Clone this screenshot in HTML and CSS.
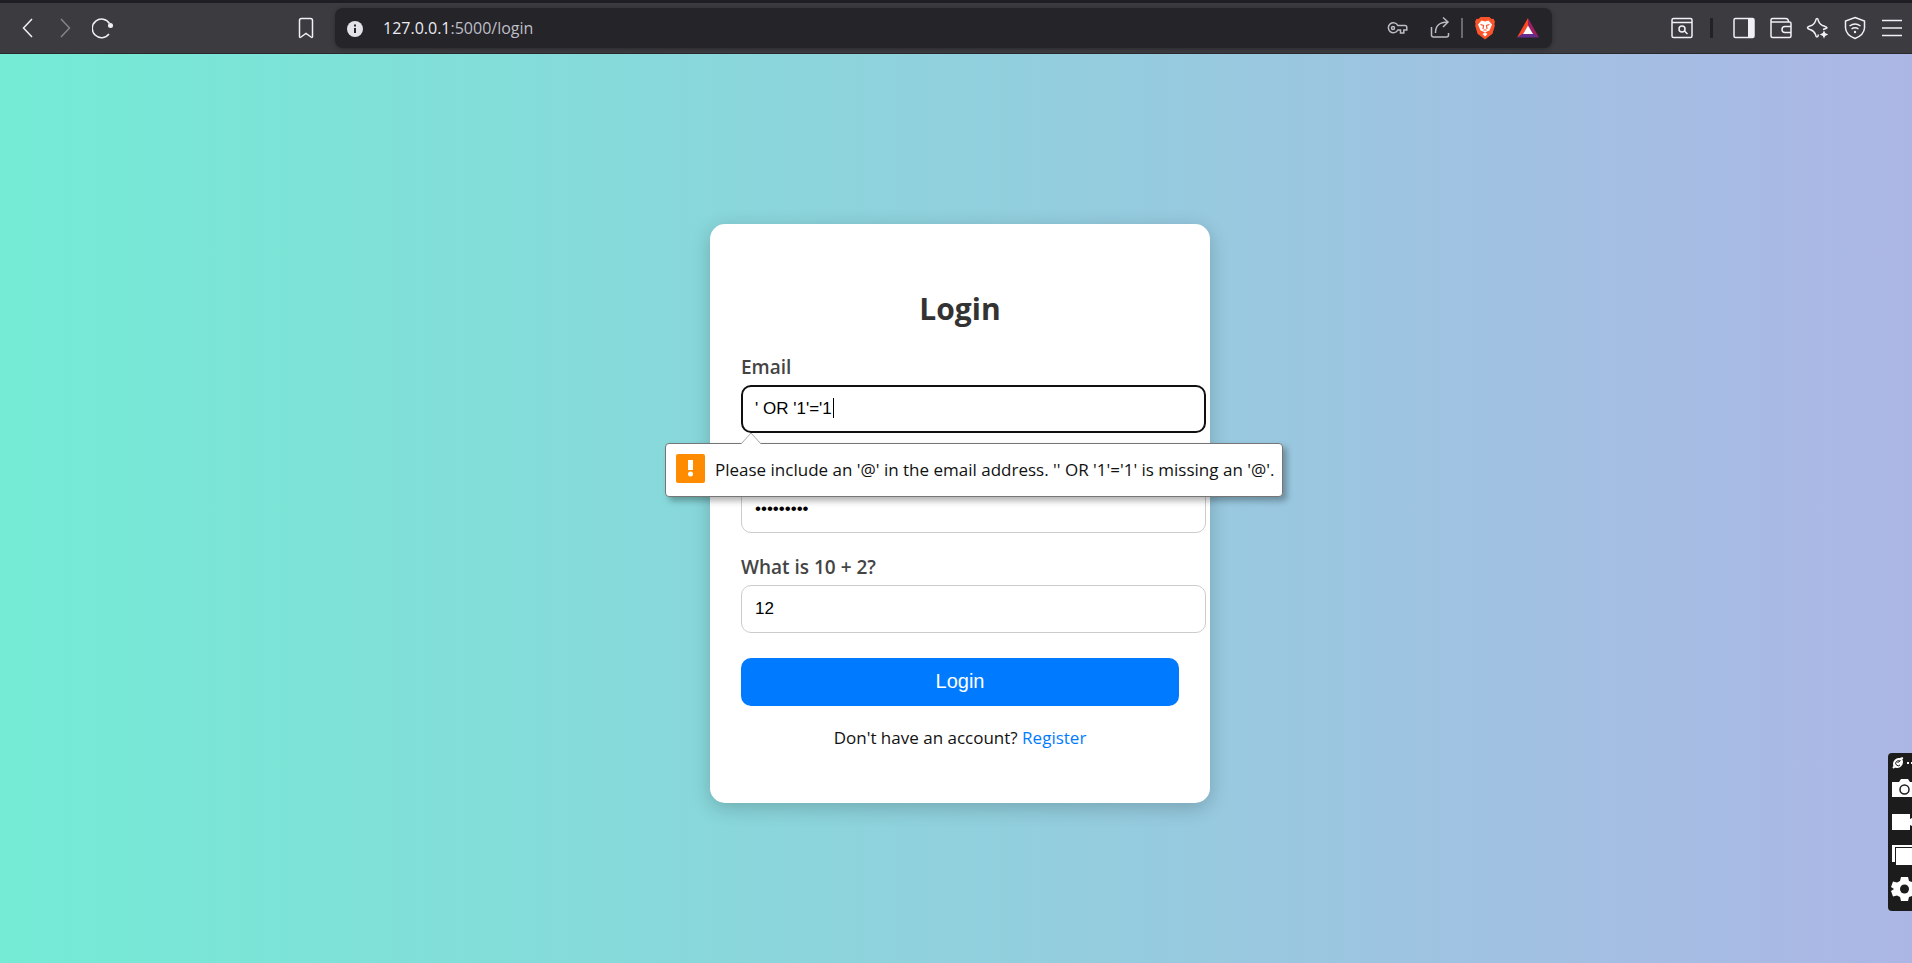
FILE: index.html
```html
<!DOCTYPE html>
<html lang="en">
<head>
<meta charset="utf-8">
<title>Login</title>
<link rel="stylesheet" href="styles.css">
</head>
<body>
<header class="toolbar">
  <nav class="nav-group" aria-label="Navigation">
    <button class="tool" aria-label="Back"><svg width="24" height="24" viewBox="0 0 24 24"><path d="M16 3 7.500 12 16 21"/></svg></button>
    <button class="tool dim" aria-label="Forward"><svg width="24" height="24" viewBox="0 0 24 24"><path d="M7 3l8.500 9L7 21"/></svg></button>
    <button class="tool" aria-label="Reload"><svg width="24" height="24" viewBox="0 0 24 24"><path d="M17.500 7.500A9.300 9.300 0 1 0 17 18"/><circle class="solid" cx="18.500" cy="9.500" r="2.500"/></svg></button>
    <button class="tool bookmark" aria-label="Bookmark"><svg width="24" height="24" viewBox="0 0 24 24"><path d="M5.500 20.500V4.500Q5.500 2.500 7.500 2.500H16.500Q18.500 2.500 18.500 4.500V20.500Q18.500 22 17 21L12 17.500 7 21Q5.500 22 5.500 20.500Z"/></svg></button>
  </nav>
  <div class="address">
    <svg class="info" width="18" height="18" viewBox="0 0 18 18"><circle cx="9" cy="9" r="8" fill="#e3e2e8"/><path d="M9 8v5M9 4.500v2" stroke="#242429" stroke-width="2"/></svg>
    <p class="url"><span class="host">127.0.0.1</span>:5000/login</p>
    <div class="address-tools">
      <button class="tool muted" aria-label="Passwords"><svg width="24" height="24" viewBox="0 0 24 24"><path d="M12.800 9.500H20q1.800 0 1.800 2v2.500h-3v3h-3.300v-3h-2.700A5 5 0 1 1 12.800 9.500Z"/><circle cx="8" cy="12" r="1.500"/></svg></button>
      <button class="tool muted" aria-label="Share"><svg width="24" height="24" viewBox="0 0 24 24"><path d="M3.500 11v8q0 2 2 2h13q2 0 2-2v-2M7.500 17c0-7 3-11 12.500-11M15 1.500l5 4.500-5 5"/></svg></button>
      <span class="divider"></span>
      <button class="tool" aria-label="Brave Shields"><svg width="24" height="24" viewBox="0 0 24 24"><path d="M7.500 1h9l2 2 2-.3 1.500 3-.6 2 .4 2-2.300 8L12 23.500 4.500 17.700 2.200 9.700l.4-2-.6-2 1.500-3 2 .3Z" fill="#fb542b" stroke="none"/><path d="M8.500 4.500 12 5.500l3.500-1 3.500 4-2.500 6-2.500 1-2 1 2.500 1.500L12 20.500 9.500 18l2.500-1.500-2-1-2.500-1L5 8.500Z" fill="#fff" stroke="none"/><path d="M7.500 8.500l3 1-.5 3.500M16.500 8.500l-3 1 .5 3.500M10.500 14h3" stroke="#fb542b" stroke-width="1.200"/></svg></button>
      <button class="tool" aria-label="Brave Rewards"><svg width="24" height="24" viewBox="0 0 24 24"><path d="M12 2 1 21.500 7 18 12 9.500Z" fill="#ff4724" stroke="none"/><path d="M12 2 23 21.500 17 18 12 9.500Z" fill="#9e1f63" stroke="none"/><path d="M1 21.500H23L17 17.500H7Z" fill="#662d91" stroke="none"/><path d="M12 9.500 17 18H7Z" fill="#fff" stroke="none"/></svg></button>
    </div>
  </div>
  <div class="actions">
    <button class="tool" aria-label="Search tabs"><svg width="24" height="24" viewBox="0 0 24 24"><rect x="2" y="2.500" width="20" height="19" rx="1.500"/><path d="M2 6.500h20"/><circle cx="12" cy="13" r="3"/><path d="M14.500 15l3 3"/></svg></button>
    <span class="notch"></span>
    <button class="tool" aria-label="Sidebar"><svg width="24" height="24" viewBox="0 0 24 24"><rect x="2" y="2.500" width="20" height="19" rx="1.500"/><path class="solid" d="M16 3h6v18h-6z"/></svg></button>
    <button class="tool" aria-label="Wallet"><svg width="24" height="24" viewBox="0 0 24 24"><path d="M2 4q0-1.500 1.500-1.500H16.500Q19.500 2.500 19.500 6H20.500Q22 6 22 7.500V20Q22 21.500 20.500 21.500H3.500Q2 21.500 2 20ZM2.500 6H20M22 10.500H16q-3 0-3 3t3 3H22"/></svg></button>
    <button class="tool" aria-label="Assistant"><svg width="24" height="24" viewBox="0 0 24 24"><path d="M11 2.500Q12 2.500 12.500 5 14 9 18 10 21 11 21 11.800 20.500 12.500 17 13.500 M11 2.500Q10 2.500 9.500 5 8 9 4 10 1.500 10.800 1.500 11.800 2 12.800 4 13.500 8 14.800 9.500 18.500 10 21 11 21 12 21 12.500 18.500"/><path class="solid" d="M18 14.500l1.200 2.600 3 1.400-3 1.400L18 22.500l-1.200-2.600-3-1.400 3-1.400z"/></svg></button>
    <button class="tool" aria-label="VPN"><svg width="24" height="24" viewBox="0 0 24 24"><path d="M12 1.500 21.500 5V12Q21 19 12 22.500 3 19 2.500 12V5ZM6.500 10Q12 6 17.500 10M8.500 13Q12 10.500 15.500 13"/><circle class="solid" cx="12" cy="16" r="1.200"/></svg></button>
    <button class="tool" aria-label="Menu"><svg width="24" height="24" viewBox="0 0 24 24"><path d="M2 4.500h20M2 12h20M2 19.500h20"/></svg></button>
  </div>
</header>

<main class="page">
  <form class="card" novalidate>
    <h2 class="title">Login</h2>
    <div class="field">
      <label for="email">Email</label>
      <div class="control">
        <input class="current" id="email" type="text" value="' OR '1'='1">
        <span class="caret"></span>
        <div class="bubble" role="alert">
          <svg class="arrow" width="22" height="12" viewBox="0 0 22 12"><path d="M1 12 11 1 21 12" fill="#fff" stroke="#a8a8a8"/></svg>
          <svg class="warn" width="29" height="29" viewBox="0 0 29 29"><rect width="29" height="29" rx="2" fill="#ff8c00"/><path d="M12 6h5v10h-5z" fill="#fff"/><circle cx="14.500" cy="20" r="2.500" fill="#fff"/></svg>
          <span>Please include an '@' in the email address. '' OR '1'='1' is missing an '@'.</span>
        </div>
      </div>
    </div>
    <div class="field">
      <label class="covered" for="password">Password</label>
      <input id="password" type="password" value="password1">
    </div>
    <div class="field">
      <label for="captcha">What is 10 + 2?</label>
      <input id="captcha" type="text" value="12">
    </div>
    <button class="submit" type="button">Login</button>
    <p class="register">Don't have an account? <a href="#register">Register</a></p>
  </form>
</main>

<aside class="recorder" aria-label="Capture tools">
  <svg width="24" height="24" viewBox="0 0 24 24"><ellipse cx="10" cy="10" rx="5.500" ry="4.500" fill="#fff" transform="rotate(-45 10 10)"/><path d="M5 15l2-2M12 6l3-1" stroke="#fff" stroke-width="2"/><path d="M12 8.500a2.500 2.500 0 1 0 0 3.500M9.500 10l3-3" fill="none" stroke="#1c1c1c"/><path d="M19 9h2v2h-2zM23 9h1v2h-1z" fill="#fff"/></svg>
  <button class="capture" aria-label="Screenshot"><svg width="24" height="24" viewBox="0 0 24 24"><path d="M4 5h7l2-3h7l2 3h2v15H4z" fill="#fff"/><circle cx="16.500" cy="12.500" r="4.500" fill="none" stroke="#1c1c1c" stroke-width="1.500"/></svg></button>
  <button class="capture" aria-label="Record"><svg width="24" height="24" viewBox="0 0 24 24"><path d="M4 4h18v5l2-1v8l-2-1v5H4z" fill="#fff"/></svg></button>
  <button class="capture" aria-label="Gallery"><svg width="24" height="24" viewBox="0 0 24 24"><path d="M4 2h20v2H7v15H4zM8 5h16v17H8z" fill="#fff"/></svg></button>
  <button class="capture" aria-label="Settings"><svg width="24" height="26" viewBox="0 0 24 26"><path d="M13 1h7l1 4 3 1v14l-3 1-1 4h-7l-1-4-3-1.500-4 1L3 15l3-2-3-2 2-5.500 4 1L12 5z" fill="#fff"/><circle cx="16.500" cy="13" r="4.500" fill="#1c1c1c"/></svg></button>
</aside>
</body>
</html>
```
FILE: styles.css
```css
* { box-sizing: border-box; }

body {
  margin: 0;
  min-height: 100vh;
  display: flex;
  flex-direction: column;
  font-family: "Open Sans", "Noto Sans", sans-serif;
  font-size: 17px;
  line-height: 24px;
  color: #111;
  background: linear-gradient(to right, #74ebd5, #acb6e5);
}

button { font: inherit; cursor: pointer; }

.toolbar {
  display: flex;
  align-items: center;
  height: 54px;
  padding-right: 2px;
  border-top: 3px solid #1f1e24;
  border-bottom: 1px solid #2a292e;
  background: #3c3b40;
}

.tool {
  display: flex;
  align-items: center;
  justify-content: center;
  width: 37px;
  height: 36px;
  padding: 0;
  border: 0;
  background: none;
  color: #f1f0f6;
}
.tool svg { fill: none; stroke: currentColor; stroke-width: 1.5; }
.tool .solid { fill: currentColor; stroke: none; }
.tool.dim { color: #85848a; }
.tool.muted { color: #bdbcc4; }

.nav-group { display: flex; flex: none; width: 335px; padding: 0 10px 0 9px; }
.nav-group .tool { width: 38px; }
.nav-group .bookmark { margin-left: auto; }

.address {
  display: flex;
  flex: 1;
  align-items: center;
  height: 40px;
  padding: 0 3px 0 11px;
  border-radius: 8px;
  background: #242429;
  box-shadow: 0 1px 5px rgba(0, 0, 0, .3);
}
.info { margin-top: 2px; }
.url { flex: 1; margin: 0 0 0 19px; font-size: 16px; color: #bfbec6; }
.host { color: #ecebf1; }
.address-tools { display: flex; align-items: center; }
.address-tools .tool { width: 43px; }
.divider { width: 2px; height: 20px; background: #6b6a70; }

.actions { display: flex; flex: none; align-items: center; width: 358px; justify-content: flex-end; }
.notch { width: 3px; height: 20px; margin: 0 12px 0 10px; background: #222126; border-radius: 1px; }

.page {
  flex: 1;
  display: flex;
  align-items: center;
  justify-content: center;
  padding: 20px 16px 10px 24px;
}

.card {
  width: 500px;
  padding: 31px;
  border-radius: 15px;
  background: #fff;
  box-shadow: 0 5px 20px rgba(0, 0, 0, .2);
}
.title {
  margin: 34px 0 26px;
  font-size: 30px;
  line-height: 40px;
  text-align: center;
  color: #333;
}
.field { margin-bottom: 22px; }
.field label {
  display: block;
  margin-bottom: 6px;
  font-size: 19px;
  font-weight: 600;
  color: #444;
}
.field .covered { visibility: hidden; }
.control { position: relative; }
.field input {
  display: block;
  box-sizing: content-box;
  width: calc(100% - 1px);
  height: 20px;
  padding: 13px;
  border: 1px solid #ccc;
  border-radius: 10px;
  outline: 0;
  background: #fff;
  color: #000;
  font: 17px "Liberation Sans", Arial, sans-serif;
}
.field .current { padding: 12px; border: 2px solid #101010; }

.caret {
  position: absolute;
  left: 92px;
  top: 13px;
  width: 1px;
  height: 20px;
  background: #000;
}

.bubble {
  position: absolute;
  z-index: 1;
  top: 58px;
  left: -76px;
  display: flex;
  align-items: center;
  gap: 10px;
  height: 54px;
  padding: 0 8px 0 10px;
  border: 1px solid #767676;
  border-radius: 4px;
  background: #fff;
  box-shadow: 4px 4px 6px rgba(0, 0, 0, .3);
  white-space: nowrap;
}
.warn { margin-bottom: 4px; }
.arrow { position: absolute; top: -12px; left: 74px; }

.submit {
  display: block;
  width: 100%;
  height: 48px;
  margin-top: 25px;
  padding: 0 0 2px;
  border: 0;
  border-radius: 10px;
  background: #007bff;
  color: #fff;
  font: 20px "Liberation Sans", Arial, sans-serif;
}
.register { margin: 20px 0 22px; text-align: center; }
.register a { color: #007bff; text-decoration: none; }

.recorder {
  position: fixed;
  right: 0;
  top: 753px;
  display: flex;
  flex-direction: column;
  width: 24px;
  height: 158px;
  border-radius: 4px 0 0 4px;
  background: #1c1c1c;
}
.capture { display: flex; align-items: flex-start; height: 33px; padding: 0; border: 0; background: none; }
```
